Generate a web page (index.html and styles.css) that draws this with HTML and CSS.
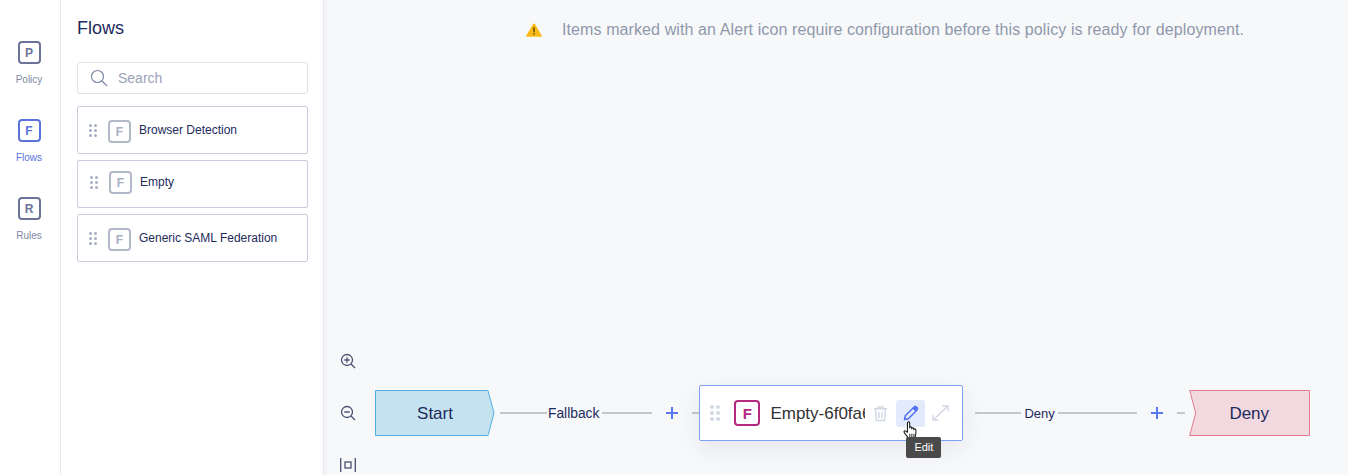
FILE: index.html
```html
<!DOCTYPE html>
<html lang="en">
<head>
  <title>Policy Flows</title>
  <meta charset="UTF-8">
  <link rel="stylesheet" href="styles.css">
</head>
<body>
<div class="app">
  <nav class="rail">
    <div class="rail-item">
      <span class="letter-box">P</span>
      <span class="rail-label">Policy</span>
    </div>
    <div class="rail-item active">
      <span class="letter-box">F</span>
      <span class="rail-label">Flows</span>
    </div>
    <div class="rail-item">
      <span class="letter-box">R</span>
      <span class="rail-label">Rules</span>
    </div>
  </nav>

  <aside class="panel">
    <h1 class="panel-title">Flows</h1>
    <div class="search">
      <svg class="search-icon" width="18" height="18" viewBox="0 0 18 18" fill="none" stroke="#7f88a3" stroke-width="1.2">
        <circle cx="7.5" cy="7.5" r="6"/>
        <path d="M12 12l5 5"/>
      </svg>
      <span class="search-text">Search</span>
    </div>
    <div class="flow-card">
      <span class="dots"><i></i><i></i><i></i><i></i><i></i><i></i></span>
      <span class="letter-box muted">F</span>
      <span class="flow-name">Browser Detection</span>
    </div>
    <div class="flow-card tight">
      <span class="dots"><i></i><i></i><i></i><i></i><i></i><i></i></span>
      <span class="letter-box muted">F</span>
      <span class="flow-name">Empty</span>
    </div>
    <div class="flow-card">
      <span class="dots"><i></i><i></i><i></i><i></i><i></i><i></i></span>
      <span class="letter-box muted">F</span>
      <span class="flow-name">Generic SAML Federation</span>
    </div>
  </aside>

  <main class="canvas">
    <div class="alert">
      <svg width="16" height="14" viewBox="0 0 16 14">
        <path d="M8 0.5c.4 0 .7.2.9.5l6.800 11.400c.4.700 0 1.400-.8 1.400H1.100c-.8 0-1.200-.7-.8-1.400L7.100 1c.2-.3.5-.5.9-.5z" fill="#fdb913"/>
        <rect x="7.300" y="4.200" width="1.400" height="5" fill="#5a4a10"/>
        <rect x="7.300" y="10.200" width="1.400" height="1.500" fill="#5a4a10"/>
      </svg>
      <span>Items marked with an Alert icon require configuration before this policy is ready for deployment.</span>
    </div>

    <div class="flow-row">
      <div class="zoom-tools">
        <svg width="16" height="16" viewBox="0 0 16 16" fill="none" stroke="#4a5170" stroke-width="1.300">
          <circle cx="7" cy="7" r="5.500"/>
          <path d="M11 11l4 4M7 4.300v5.400M4.300 7h5.400"/>
        </svg>
        <svg width="16" height="16" viewBox="0 0 16 16" fill="none" stroke="#4a5170" stroke-width="1.300">
          <circle cx="7" cy="7" r="5.500"/>
          <path d="M11 11l4 4M4.300 7h5.400"/>
        </svg>
        <svg width="16" height="16" viewBox="0 0 16 16" fill="none" stroke="#4a5170" stroke-width="1.300">
          <path d="M.7 1v14M15.300 1v14"/>
          <rect x="5" y="5" width="6" height="6"/>
        </svg>
      </div>

      <div class="end-node start-node">
        <svg width="120" height="46" viewBox="0 0 120 46">
          <path d="M.5.5h112.500l6 22.500-6 22.500H.5z" fill="#c5e2f1" stroke="#4fb0e0"/>
        </svg>
        <span>Start</span>
      </div>

      <div class="edge fallback-edge">
        <span class="line"></span>
        <span class="edge-label">Fallback</span>
        <span class="line"></span>
        <span class="plus"></span>
        <span class="line stub"></span>
      </div>

      <div class="flow-node">
        <span class="dots big"><i></i><i></i><i></i><i></i><i></i><i></i></span>
        <span class="letter-box node-box">F</span>
        <span class="node-name">Empty-6f0fa6c1</span>
        <svg class="node-action" width="15" height="17" viewBox="0 0 16 17" fill="none" stroke="#d3d8e6" stroke-width="1.500">
          <path d="M1 3.500h14M5.500 3.500V1.500h5v2M2.800 3.500l.7 12.500h9l.7-12.500M6.300 6.500v7M9.700 6.500v7"/>
        </svg>
        <span class="edit-btn">
          <svg width="16" height="16" viewBox="0 0 16 16">
            <path d="M1.500 14.500l.8-3.800L10.800 2.200c.8-.8 1.900-.8 2.600-.1l.5.500c.7.700.7 1.800-.1 2.600L5.300 13.700z" fill="#e3eafb" stroke="#4f6ef0" stroke-width="1.500" stroke-linejoin="round"/>
            <path d="M9.500 3.500l3 3 1-1c.6-.7.6-1.500 0-2.200l-.8-.8c-.7-.6-1.500-.6-2.200 0z" fill="#4f6ef0"/>
          </svg>
        </span>
        <svg class="node-action expand" width="17" height="16" viewBox="0 0 18 17" fill="none" stroke="#d3d8e6" stroke-width="1.500">
          <path d="M1 16L17 1M11 1h6v5.500M1 10.500V16h6"/>
        </svg>
        <svg class="hand" width="16" height="19" viewBox="0 0 14 18.500">
          <path d="M5 17c-1-1.500-3.500-4-3.800-5.200-.3-1 .8-1.700 1.700-1L4.500 12V3c0-1.700 2.200-1.700 2.200 0v4.500c0-1.300 2-1.300 2 0v1c0-1.300 2-1.300 2 0v1c0-1.200 2-1.200 2 .2 .2 2.500.2 4.800-.8 7.300z" fill="#fff" stroke="#111" stroke-width="1" stroke-linejoin="round"/>
          <path d="M6.800 13.500v3M8.800 13.500v3M10.800 13.500v3" stroke="#333" stroke-width="1"/>
        </svg>
        <span class="tooltip">Edit</span>
      </div>

      <div class="edge deny-edge">
        <span class="line"></span>
        <span class="edge-label">Deny</span>
        <span class="line"></span>
        <span class="plus"></span>
        <span class="line stub"></span>
      </div>

      <div class="end-node deny-node">
        <svg width="121" height="46" viewBox="0 0 121 46">
          <path d="M.7.5h119.800v45H.7l6-22.500z" fill="#f2d8df" stroke="#e57a8e"/>
        </svg>
        <span>Deny</span>
      </div>
    </div>
  </main>
</div>
</body>
</html>
```

FILE: styles.css
```css
html, body {
  margin: 0;
  height: 100%;
  overflow: hidden;
}
body {
  font-family: "Liberation Sans", Arial, sans-serif;
  color: #1d2a5c;
  background-color: #f7f8fa;
}
.app {
  display: flex;
  height: 475px;
}

/* left icon rail */
.rail {
  width: 58px;
  flex: none;
  padding: 41px 2px 0 0;
  background-color: white;
  border-right: 1px solid #e6e8f0;
}
.rail-item {
  display: flex;
  flex-direction: column;
  align-items: center;
  height: 78px;
  color: #7f88a3;
}
.rail-item .letter-box {
  color: #6b7498;
  border-color: #6b7498;
}
.rail-item.active,
.rail-item.active .letter-box {
  color: #5a74dc;
  border-color: #5a74dc;
}
.rail-label {
  margin-top: 10px;
  font-size: 10px;
  line-height: 12px;
}
.letter-box {
  display: flex;
  align-items: center;
  justify-content: center;
  flex: none;
  box-sizing: border-box;
  width: 23px;
  height: 23px;
  border: 2px solid #6b7498;
  border-radius: 4px;
  font-size: 12px;
  font-weight: bold;
}
.letter-box.muted {
  color: #a7aec2;
  border-color: #b3b9cb;
}

/* flows panel */
.panel {
  width: 231px;
  flex: none;
  padding: 0 15px 0 16px;
  background-color: white;
  border-right: 1px solid #e6e8f0;
  box-shadow: 2px 0 5px rgba(30, 40, 90, 0.03);
  z-index: 1;
}
.panel-title {
  margin: 18px 0 0;
  font-size: 18px;
  line-height: 21px;
  font-weight: normal;
}
.search {
  display: flex;
  align-items: center;
  box-sizing: border-box;
  height: 32px;
  margin: 23px 0 12px;
  padding-left: 12px;
  border: 1px solid #dfe2ea;
  border-radius: 3px;
}
.search-text {
  margin-left: 10px;
  font-size: 14px;
  color: #9aa2b8;
}
.flow-card {
  display: flex;
  align-items: flex-start;
  box-sizing: border-box;
  height: 48px;
  margin-bottom: 6px;
  padding: 13px 0 0 11px;
  border: 1px solid #c9cedd;
  border-radius: 2px;
}
.flow-card .flow-name {
  margin: 3px 0 0 8px;
  font-size: 12px;
  line-height: 14px;
}
.flow-card .dots {
  margin: 4px 11px 0 0;
}
.flow-card.tight {
  padding: 10px 0 0 12px;
}
.flow-card.tight .flow-name {
  margin-top: 4px;
}
.flow-card.tight .dots {
  margin-top: 5px;
}
.dots {
  display: grid;
  grid-template-columns: 3px 3px;
  grid-auto-rows: 3px;
  gap: 2px;
  flex: none;
}
.dots i {
  background-color: #a7aec2;
  border-radius: 50%;
}

/* canvas */
.canvas {
  flex: 1;
  display: flex;
  flex-direction: column;
  justify-content: space-between;
  padding-bottom: 2px;
  min-width: 0;
}
.alert {
  display: flex;
  align-items: center;
  gap: 20px;
  margin: 21px 0 0 202px;
  font-size: 16px;
  line-height: 18px;
  letter-spacing: 0.1px;
  color: #8f98ab;
  white-space: nowrap;
}
.flow-row {
  display: flex;
  align-items: center;
  padding-left: 16px;
}
.zoom-tools {
  display: flex;
  flex-direction: column;
  gap: 36px;
  margin-right: 19px;
}
.zoom-tools svg {
  display: block;
}
.end-node {
  position: relative;
  display: flex;
  align-items: center;
  justify-content: center;
  flex: none;
  box-sizing: border-box;
  height: 46px;
  padding-top: 2px;
  font-size: 17px;
}
.end-node svg {
  position: absolute;
  left: 0;
  top: 0;
}
.end-node span {
  position: relative;
}
.start-node {
  width: 120px;
}
.deny-node {
  width: 121px;
  margin-left: 4px;
}
.edge {
  display: flex;
  align-items: center;
  flex: none;
  font-size: 13px;
}
.edge .line {
  height: 2px;
  background-color: #c5c6c9;
}
.edge-label {
  padding: 0 3px;
}
.plus {
  position: relative;
  width: 12px;
  height: 12px;
  flex: none;
  background:
    linear-gradient(#5a78f2, #5a78f2) center / 12px 2px no-repeat,
    linear-gradient(#5a78f2, #5a78f2) center / 2px 12px no-repeat;
}
.fallback-edge { margin-left: 5px; }
.fallback-edge .edge-label { padding-left: 1px; font-size: 13.8px; }
.fallback-edge .line:nth-child(1) { width: 47px; }
.fallback-edge .line:nth-child(3) { width: 50px; }
.fallback-edge .plus { margin: 0 14px 0 14px; }
.fallback-edge .stub { width: 7px; }
.deny-edge { margin-left: 12px; }
.deny-edge .line:nth-child(1) { width: 46px; }
.deny-edge .line:nth-child(3) { width: 79px; }
.deny-edge .plus { margin: 0 14px; }
.deny-edge .stub { width: 8px; }

/* selected node */
.flow-node {
  position: relative;
  display: flex;
  align-items: center;
  flex: none;
  box-sizing: border-box;
  width: 264px;
  height: 56px;
  padding-left: 10px;
  background-color: white;
  border: 1px solid #7d9ff5;
  border-radius: 2px;
  box-shadow: 0 8px 24px rgba(30, 40, 90, 0.08);
}
.dots.big {
  grid-template-columns: 4px 4px;
  grid-auto-rows: 4px;
  gap: 2px 2px;
}
.dots.big i {
  background-color: #d3d8e6;
}
.node-box {
  width: 26px;
  height: 26px;
  margin-left: 14px;
  border-width: 2px;
  border-color: #b5287f;
  color: #b5287f;
  font-size: 15px;
}
.node-name {
  width: 95px;
  margin: 2px 0 0 10px;
  overflow: hidden;
  white-space: nowrap;
  font-size: 17px;
  color: #333;
}
.node-action {
  flex: none;
  margin-left: 8px;
}
.node-action.expand {
  margin-left: 7px;
}
.edit-btn {
  display: flex;
  align-items: center;
  justify-content: center;
  flex: none;
  width: 29px;
  height: 27px;
  margin-left: 8px;
  background-color: #e3eafb;
  border-radius: 3px;
}
.hand {
  position: absolute;
  left: 202px;
  top: 34px;
}
.tooltip {
  position: absolute;
  left: 206px;
  top: 51px;
  width: 35px;
  height: 21px;
  line-height: 21px;
  text-align: center;
  font-size: 11px;
  color: white;
  background-color: #4a4a4a;
  border-radius: 2px;
}
```
